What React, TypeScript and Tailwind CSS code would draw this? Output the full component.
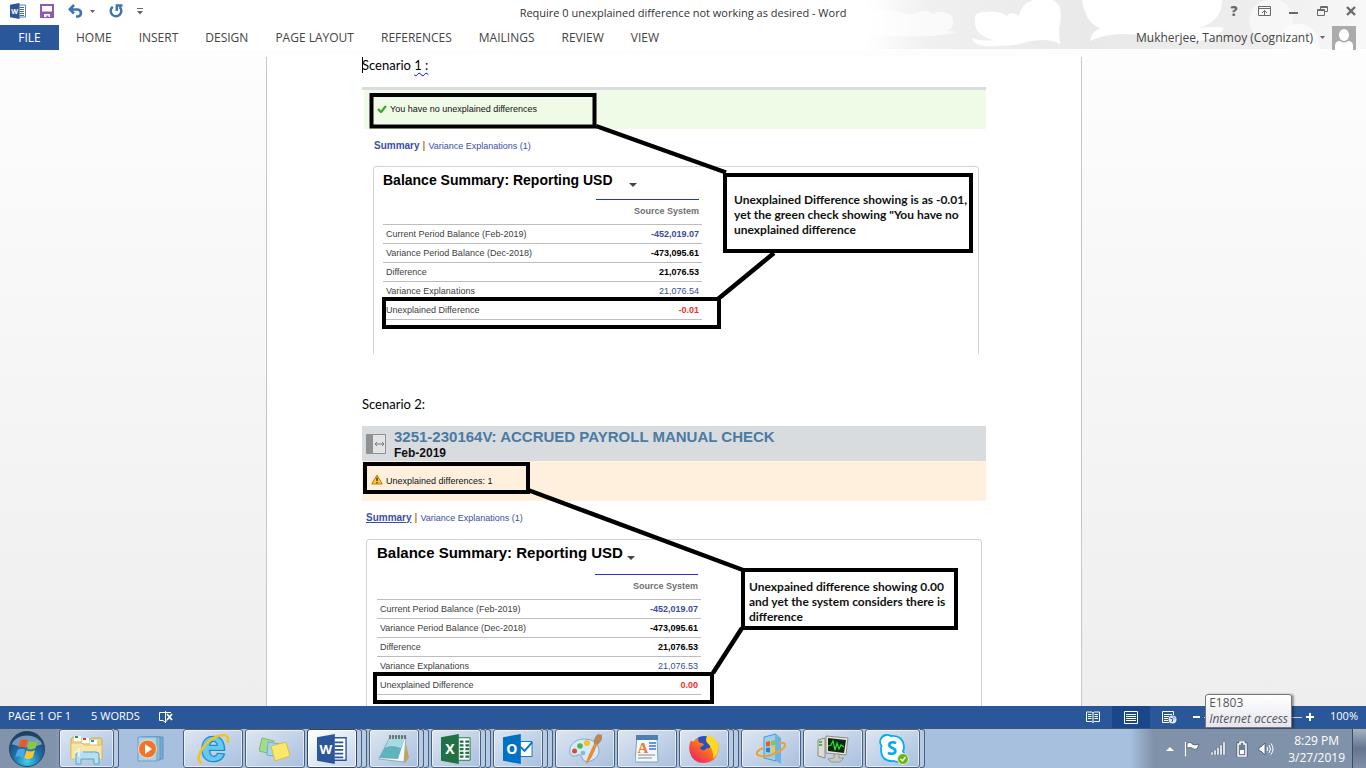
import React from "react";

type Row = { label: string; value: string; tone: string };

const TABS = ["HOME", "INSERT", "DESIGN", "PAGE LAYOUT", "REFERENCES", "MAILINGS", "REVIEW", "VIEW"];

const scenarioOne: Row[] = [
  { label: "Current Period Balance (Feb-2019)", value: "-452,019.07", tone: "font-bold text-[#3c4a9e]" },
  { label: "Variance Period Balance (Dec-2018)", value: "-473,095.61", tone: "font-bold text-black" },
  { label: "Difference", value: "21,076.53", tone: "font-bold text-black" },
  { label: "Variance Explanations", value: "21,076.54", tone: "text-[#3c4a9e]" },
  { label: "Unexplained Difference", value: "-0.01", tone: "font-bold text-[#f03028]" },
];

const scenarioTwo: Row[] = [
  ...scenarioOne.slice(0, 3),
  { label: "Variance Explanations", value: "21,076.53", tone: "text-[#3c4a9e]" },
  { label: "Unexplained Difference", value: "0.00", tone: "font-bold text-[#f03028]" },
];

/* ---------- title bar and ribbon ---------- */

function WordMark({ className }: { className: string }) {
  return (
    <svg viewBox="0 0 32 32" className={className} aria-hidden="true">
      <path d="M17 4h14v24H17z" fill="#fff" stroke="#2b579a" strokeWidth="1.500" />
      <path d="M19 9h9M19 13h9M19 17h9M19 21h9M19 25h9" stroke="#2b579a" strokeWidth="1.800" />
      <path d="M0 3.500 19 0v32L0 28.500z" fill="#2b579a" />
      <text x="9.500" y="21" textAnchor="middle" fontFamily="Open Sans" fontWeight="700" fontSize="14" fill="#fff">W</text>
    </svg>
  );
}

function Clouds() {
  return (
    <svg className="absolute right-0 top-0 h-[49px] w-[500px]" viewBox="0 0 500 49" aria-hidden="true">
      <defs>
        <linearGradient id="sky" x1="0" x2="1">
          <stop offset="0" stopColor="#fff" />
          <stop offset="0.12" stopColor="#f0f0f0" />
          <stop offset="0.45" stopColor="#e9e9e9" />
          <stop offset="0.8" stopColor="#eeeeee" />
          <stop offset="1" stopColor="#f8f8f8" />
        </linearGradient>
      </defs>
      <path d="M0 0h500v49H0z" fill="url(#sky)" />
      <g fill="#fff">
        <path d="M0 12q20-4 34 0 10 4 20 0 6-4 13 2 12-6 20 4 2 10-6 13l10 1q-30 8-91 2z" fillOpacity="0.65" />
        <path d="M109 20q-2-8 10-8 14-2 22 4 4-6 12 0 2-12 14-16h20q12 6 6 28l1 16q-12-7-34-2-10 4-28 4-24 2-26-8 10 4 22 2-20-4-19-20z" />
        <path d="M216 0h140q0 22-24 28 20-2 26 0-6 14-44 14-18 1-34-6-34-6-56 5 0-8 10-13-14-4-18-28z" />
        <path d="M330 3q8-5 16 0-2 24-26 26 12-12 10-26z" fillOpacity="0.6" />
        <path d="M390 4q12-6 24-4 16 8 12 24 20 4 24 25h-44q-2-14-18-14-10-16 2-31z" fillOpacity="0.5" />
        <path d="M418 30q8-8 20-6 14 4 16 25h-34z" fillOpacity="0.6" />
      </g>
    </svg>
  );
}

function Caret({ className = "h-[3px] w-[5px] text-[#666]" }: { className?: string }) {
  return (
    <svg viewBox="0 0 8 4" preserveAspectRatio="none" className={className} aria-hidden="true">
      <path d="M0 0h8L4 4z" fill="currentColor" />
    </svg>
  );
}

function TitleBar() {
  return (
    <div className="relative flex h-[25px] items-center justify-between pb-[3px]">
      <div className="flex items-center pl-[10px]">
        <WordMark className="h-4 w-4" />
        <button aria-label="Save" className="ml-[14px]">
          <svg viewBox="0 0 14 14" className="h-[14px] w-[14px]">
            <path d="M1 1h12v12H1z" fill="#fff" stroke="#8e5bb0" strokeWidth="2" />
            <path d="M1 7.500h12V13H1z" fill="#8e5bb0" />
            <path d="M4 10h6v3H8.500v-1.500H6.500V13H4z" fill="#fff" />
          </svg>
        </button>
        <button aria-label="Undo" className="ml-[14px] flex items-center gap-[6px]">
          <svg viewBox="0 0 16 14" className="h-[14px] w-4" fill="none" stroke="#3f74b0" strokeWidth="2.600">
            <path d="M2 5.500h8a3.800 3.600 0 0 1 0 7H8M6 1 1.800 5.300 6 9.500" />
          </svg>
          <Caret />
        </button>
        <button aria-label="Repeat" className="ml-[14px]">
          <svg viewBox="0 0 14 14" className="h-[14px] w-[14px]" fill="none" stroke="#3f74b0" strokeWidth="2.500">
            <path d="M3.800 2.800A5.300 5.300 0 1 0 10.500 3M7.800 7V1.500H13.500" />
          </svg>
        </button>
        <button aria-label="Customize Quick Access Toolbar" className="ml-[14px]">
          <svg viewBox="0 0 6 7" className="h-[7px] w-[6px]">
            <path d="M0 0h6v1H0zM0 3h6L3 6.500z" fill="#666" />
          </svg>
        </button>
      </div>
      <h1 className="absolute left-1/2 top-[5px] -translate-x-1/2 whitespace-nowrap text-[11px] leading-4 text-[#333]">
        Require 0 unexplained difference not working as desired - Word
      </h1>
      <div className="flex items-center gap-[18px] pr-[10px] text-[#6a6a6a]">
        <button aria-label="Help" className="w-3 text-[14px] font-extrabold leading-4">?</button>
        <button aria-label="Ribbon Display Options">
          <svg viewBox="0 0 13 10" className="h-[10px] w-[13px]" fill="none" stroke="currentColor">
            <path d="M.5.5h12v9H.5zM.5 2.500h12M6.500 9V4.500M4 7l2.500-2.500L9 7" />
          </svg>
        </button>
        <button aria-label="Minimize">
          <svg viewBox="0 0 10 10" className="h-[10px] w-[10px]"><path d="M0 6h9v2H0z" fill="currentColor" /></svg>
        </button>
        <button aria-label="Restore Down">
          <svg viewBox="0 0 11 10" className="h-[10px] w-[11px]" fill="none" stroke="currentColor">
            <path d="M3.500 3V.5h7v5H8M3 1.500h8M.5 3.500h7v6h-7zM0 4.500h8" />
          </svg>
        </button>
        <button aria-label="Close">
          <svg viewBox="0 0 10 10" className="h-[10px] w-[10px]" stroke="currentColor" strokeWidth="2.400">
            <path d="m1 1 8 8M9 1 1 9" />
          </svg>
        </button>
      </div>
    </div>
  );
}

function Ribbon() {
  return (
    <nav className="relative flex h-[25px] items-center text-[12px] leading-4 text-[#444]">
      <button className="h-full w-[59px] bg-[#2a579a] text-white">FILE</button>
      <div className="flex gap-[27px] pl-[17px]">
        {TABS.map((tab) => (
          <button key={tab} className="whitespace-nowrap">{tab}</button>
        ))}
      </div>
      <button className="ml-auto flex h-full items-center gap-[7px] pr-[10px]">
        <span>Mukherjee, Tanmoy (Cognizant)</span>
        <Caret />
        <svg viewBox="0 0 24 24" className="h-6 w-6" aria-hidden="true">
          <path d="M0 0h24v24H0z" fill="#ababab" />
          <ellipse cx="12" cy="9" rx="5" ry="6" fill="#fff" />
          <path d="M3 24v-4q0-5 5-5 4 3 8 0 5 0 5 5v4z" fill="#fff" />
        </svg>
      </button>
    </nav>
  );
}

/* ---------- document ---------- */

function SectionLinks({ underlined }: { underlined?: boolean }) {
  return (
    <div className="flex h-[34px] items-center gap-[3px] text-[10px] leading-3 text-[#3c4fa0]">
      <a href="#summary" className={underlined ? "font-bold underline" : "font-bold"}>Summary</a>
      <span className="font-bold text-[#c87a2c]">|</span>
      <a href="#variance" className="text-[9px]">Variance Explanations (1)</a>
    </div>
  );
}

interface PanelProps {
  rows: Row[];
  className: string;
  titleClass: string;
  tableClass: string;
}

function BalancePanel({ rows, className, titleClass, tableClass }: PanelProps) {
  return (
    <section className={`rounded-t border border-b-0 border-[#d3d3d3] ${className}`}>
      <h2 className={`flex h-[26px] items-center font-bold leading-5 text-black ${titleClass}`}>
        Balance Summary: Reporting USD
        <Caret className="mt-[9px] h-1 w-2 text-[#444]" />
      </h2>
      <table className={`border-separate border-spacing-0 text-[9px] leading-3 ${tableClass}`}>
        <thead>
          <tr>
            <td className="h-[26px] border-b border-[#bdbdbd] p-0" />
            <th scope="col" className="h-[26px] w-[106px] border-b border-[#bdbdbd] p-0 pr-[3px] align-top text-right font-bold text-[#707070]">
              <div className="border-t border-[#2c2cd8] pt-[5px]">Source System</div>
            </th>
          </tr>
        </thead>
        <tbody>
          {rows.map((row) => (
            <tr key={row.label}>
              <th scope="row" className="h-[19px] border-b border-[#bdbdbd] p-0 pl-[3px] text-left font-normal text-[#404040]">{row.label}</th>
              <td className={`h-[19px] border-b border-[#bdbdbd] p-0 pr-[3px] text-right ${row.tone}`}>{row.value}</td>
            </tr>
          ))}
        </tbody>
      </table>
    </section>
  );
}

function ScenarioOne() {
  return (
    <figure className="relative mt-[14px] font-['Liberation_Sans',sans-serif]">
      <div className="h-[3px] bg-[#d8dbe0]" />
      <div className="ml-[2px] flex h-[39px] items-center gap-[3px] bg-[#effbe7] pb-[2px] pl-[13px] text-[9px] leading-3 text-[#111]">
        <svg viewBox="0 0 10 8" className="h-2 w-[10px]" aria-hidden="true">
          <path d="m1 4 3 3 5-6" fill="none" stroke="#3bab35" strokeWidth="2.400" />
        </svg>
        You have no unexplained differences
      </div>
      <div className="pl-3"><SectionLinks /></div>
      <BalancePanel rows={scenarioOne} className="ml-[11px] mr-[7px] mt-[3px] h-[188px] pl-[9px]" titleClass="gap-4 text-[14px]" tableClass="mt-[6px] w-[319px]" />
      <svg className="absolute left-0 top-0 h-[267px] w-[624px]" viewBox="0 0 624 267" fill="none" stroke="#000" strokeWidth="4" aria-hidden="true">
        <path d="M9.500 8h223v31.500h-223zM22 212h335v28H22zM363 88h246v76H363z" />
        <path d="M234 39l130 46.500M412 166l-56 46" strokeWidth="4.500" />
      </svg>
      <figcaption className="absolute left-[372px] top-[105px] whitespace-nowrap font-['Lato',sans-serif] text-[12px] font-bold leading-[15px] text-[#111]">
        Unexplained Difference showing is as -0.01,<br />yet the green check showing "You have no<br />unexplained difference
      </figcaption>
    </figure>
  );
}

function ScenarioTwo() {
  return (
    <figure className="relative mt-[14px] font-['Liberation_Sans',sans-serif]">
      <div className="flex h-[35px] items-center gap-2 bg-[#d9dcdf] pl-1">
        <svg viewBox="0 0 20 20" className="h-5 w-5" aria-hidden="true">
          <path d="M.5.5h19v19H.5z" fill="#e3e4e5" stroke="#8f9193" />
          <path d="M1 1h6v18H1z" fill="#8f9193" />
          <path d="M9 10h9M11 8l-2 2 2 2M16 8l2 2-2 2" fill="none" stroke="#777" />
        </svg>
        <div className="pt-px">
          <h2 className="text-[15px] font-bold leading-[18px] text-[#4b7aa3]">3251-230164V: ACCRUED PAYROLL MANUAL CHECK</h2>
          <p className="text-[12px] font-bold leading-[14px] text-[#111]">Feb-2019</p>
        </div>
      </div>
      <div className="flex h-10 items-center gap-[3px] bg-[#fef0dd] pl-[9px] text-[9px] leading-3 text-[#111]">
        <svg viewBox="0 0 12 11" className="mb-1 h-[11px] w-3" aria-hidden="true">
          <path d="M6 1 11.300 10H.7z" fill="#fcc62c" stroke="#b9781a" strokeLinejoin="round" />
          <path d="M6 3.500v3.500M6 8v1.200" stroke="#4a3300" strokeWidth="1.400" />
        </svg>
        Unexplained differences: 1
      </div>
      <div className="pl-1"><SectionLinks underlined /></div>
      <BalancePanel rows={scenarioTwo} className="mx-1 mt-1 h-[188px] pl-[10px]" titleClass="gap-1 text-[15px]" tableClass="mt-2 w-[324px]" />
      <svg className="absolute left-0 top-0 h-[280px] w-[624px]" viewBox="0 0 624 280" fill="none" stroke="#000" strokeWidth="4" aria-hidden="true">
        <path d="M3 38h163v28H3zM13 248h337v28H13zM381 144h213v58H381z" />
        <path d="M166 64l215 80M380 202l-29 45" strokeWidth="4.500" />
      </svg>
      <figcaption className="absolute left-[387px] top-[153px] whitespace-nowrap font-['Lato',sans-serif] text-[12px] font-bold leading-[15px] text-[#111]">
        Unexpained difference showing 0.00<br />and yet the system considers there is<br />difference
      </figcaption>
    </figure>
  );
}

function Document() {
  return (
    <main className="min-h-0 flex-1 overflow-hidden bg-linear-to-b from-[#fdfdfd] to-[#eeeeee] pr-[18px]">
      <article className="mx-auto h-full w-full max-w-[816px] overflow-hidden border-x border-[#c6c6c6] bg-white px-[95px] font-['Lato',sans-serif] text-black">
        <p className="flex h-4 items-center text-[13px] leading-4">
          <span className="-mr-px h-4 w-px bg-black" />
          Scenario&nbsp;<span className="underline decoration-[#0000ff] decoration-wavy decoration-1 underline-offset-2">1 :</span>
        </p>
        <ScenarioOne />
        <p className="mt-[42px] flex h-4 items-center text-[13px] leading-4">Scenario 2:</p>
        <ScenarioTwo />
      </article>
    </main>
  );
}

/* ---------- status bar ---------- */

function StatusBar() {
  return (
    <footer className="relative flex h-[22px] shrink-0 items-center bg-[#2a579a] text-[11px] leading-4 text-white">
      <span className="pb-[2px] pl-2">PAGE 1 OF 1</span>
      <span className="pb-[2px] pl-5">5 WORDS</span>
      <button aria-label="Proofing errors" className="ml-[18px]">
        <svg viewBox="0 0 15 12" className="h-3 w-[15px]" fill="none" stroke="#fff">
          <path d="M7 1.500H1.500v8H5l2 1.500 2-1.500M7.500 0v12M7.500 1.500H13" />
          <path d="m9 3 5 6M14 3 9 9" strokeWidth="1.800" />
        </svg>
      </button>
      <div className="ml-auto flex h-full items-center">
        <button aria-label="Read Mode" className="mr-3">
          <svg viewBox="0 0 14 12" className="h-3 w-[14px]" fill="none" stroke="#fff">
            <path d="M.5 1h5L7 2l1.500-1h5v9.500h-5L7 11.500l-1.500-1h-5zM7 2v9M2 3.500h3.500M2 5.500h3.500M2 7.500h3.500M8.500 3.500H12M8.500 5.500H12M8.500 7.500H12" />
          </svg>
        </button>
        <button aria-label="Print Layout" className="flex h-full w-[38px] items-center justify-center bg-[#19478a]">
          <svg viewBox="0 0 14 13" className="h-[13px] w-[14px]" fill="none" stroke="#fff">
            <path d="M.5.5h13v12H.5zM2 3.500h10M2 5.500h10M2 7.500h10M2 9.500h10" />
          </svg>
        </button>
        <button aria-label="Web Layout" className="ml-3">
          <svg viewBox="0 0 15 13" className="h-[13px] w-[15px]" fill="none" stroke="#fff">
            <path d="M7 11.500H.5V.5h11V4M2 3.500h8M2 5.500h5M2 7.500h4M2 9.500h4" />
            <circle cx="10.500" cy="8.500" r="4" fill="#dfe8f4" stroke="none" />
            <path d="m8 7 3 1-1 3M11 5.500l2 2" stroke="#2a579a" />
          </svg>
        </button>
        <button aria-label="Zoom Out" className="ml-4 h-[2px] w-[7px] bg-white" />
        <input
          type="range" aria-label="Zoom" min={10} max={500} defaultValue={100}
          className="ml-1 h-px w-[98px] appearance-none bg-[#c3d0e4] [&::-webkit-slider-thumb]:h-[11px] [&::-webkit-slider-thumb]:w-1 [&::-webkit-slider-thumb]:appearance-none [&::-webkit-slider-thumb]:bg-white"
        />
        <button aria-label="Zoom In" className="ml-1">
          <svg viewBox="0 0 8 8" className="h-2 w-2"><path d="M0 3h8v2H0zM3 0h2v8H3z" fill="#fff" /></svg>
        </button>
        <span className="w-[52px] pb-[2px] pr-2 text-right">100%</span>
      </div>
      <div role="tooltip" className="absolute bottom-0 right-[74px] rounded-t-[3px] border border-[#767676] bg-linear-to-b from-white to-[#e4e5f0] px-[3px] text-[12px] leading-4 text-[#575757] shadow-[2px_0_2px_rgba(0,0,0,0.35)]">
        E1803<br /><em>Internet access</em>
      </div>
    </footer>
  );
}

/* ---------- taskbar icons ---------- */

function StartOrb() {
  return (
    <svg viewBox="0 0 40 40" className="h-[38px] w-[38px]" aria-hidden="true">
      <defs>
        <radialGradient id="orb" cx="0.5" cy="0.85" r="0.8">
          <stop offset="0" stopColor="#3fd0f5" />
          <stop offset="0.5" stopColor="#1c6da8" />
          <stop offset="1" stopColor="#1b3f66" />
        </radialGradient>
      </defs>
      <circle cx="20" cy="20" r="18.500" fill="url(#orb)" stroke="#27445f" />
      <path d="M4 15a17 14 0 0 1 32 0q-14 6-32 0z" fill="#c3d7e8" fillOpacity="0.55" />
      <path d="M13 11q4-2.500 8 0l-2.500 8q-4-2.500-8 0z" fill="#ee5a24" />
      <path d="M22.500 11.500q4 2.500 9-.5l-2.500 8q-5 3-9 .5z" fill="#8cc63f" />
      <path d="M10 21q4-2.500 8 0l-2.500 8q-4-2.500-8 0z" fill="#4aa8e8" />
      <path d="M19.500 21.500q4 2.500 9-.5L26 29q-5 3-9 .5z" fill="#fdc52d" />
    </svg>
  );
}

function Explorer() {
  return (
    <svg viewBox="0 0 34 32" className="h-8 w-[34px]" aria-hidden="true">
      <path d="M1 6 3 4h7l2 2h8l2-1h9l1 2v18H1z" fill="#ead58a" stroke="#c9ad5c" />
      <path d="M4 3h7v5H4zM12 5h7v5h-7zM20 7h7v5h-7z" fill="#fff" />
      <path d="M5 3h3v2H5z" fill="#1da03a" />
      <path d="M13 5h3v2h-3z" fill="#d83a22" />
      <path d="M21 7h3v2h-3z" fill="#2d8ad8" />
      <path d="M1 10h11l2 2h18v14H1z" fill="#f6e7a6" stroke="#d9c277" />
      <path d="M6 31V22q0-3 3-3h17q3 0 3 3v9h-5v-5H11v5z" fill="#b6dff2" stroke="#5aa5cb" />
      <path d="M9 15v9M5 19h8" stroke="#fff" />
    </svg>
  );
}

function MediaPlayer() {
  return (
    <svg viewBox="0 0 28 26" className="h-[26px] w-7" aria-hidden="true">
      <path d="M8 1h18v22H8z" fill="#79acd0" stroke="#5e93b9" />
      <path d="M4 1h19v23H4z" fill="#8fc0de" stroke="#5e93b9" />
      <path d="M1 1h19v24H1z" fill="#a7d2e8" stroke="#6c9fc3" />
      <circle cx="10.500" cy="13" r="9" fill="#f0742a" stroke="#fbd9bf" />
      <path d="M8 8v10l7-5z" fill="#fff" />
    </svg>
  );
}

function InternetExplorer() {
  return (
    <svg viewBox="0 0 40 38" className="h-[38px] w-10 overflow-visible" aria-hidden="true">
      <text x="20" y="31" textAnchor="middle" fontFamily="Liberation Sans" fontWeight="700" fontSize="44" fill="#62caf3" stroke="#2188c4" strokeWidth="2.500" paintOrder="stroke">e</text>
      <path d="M9 33Q2 31 9 19 18 6 30 5q7 0 4 8" fill="none" stroke="#f4c320" strokeWidth="2.600" />
    </svg>
  );
}

function StickyNotes() {
  return (
    <svg viewBox="0 0 32 26" className="h-[26px] w-8" aria-hidden="true">
      <path d="m3 2 12 3-3 13L0 15z" fill="#9fdd8c" stroke="#79bd68" />
      <path d="m9 6 12 2-1 13-12-2z" fill="#a6d3f3" stroke="#73abd4" />
      <path d="m12 10 15-4 4 14-15 5z" fill="#fae76e" stroke="#d9bf3c" />
    </svg>
  );
}

function Notepad() {
  return (
    <svg viewBox="0 0 32 30" className="h-[30px] w-8" aria-hidden="true">
      <path d="m27 4 4 20-4 5-2-2z" fill="#c5a35a" />
      <path d="M12 3h16l-2 25L1 25z" fill="#f4f7f8" stroke="#9aabb0" />
      <path d="M12 3h15l-7 22L1 24z" fill="#5fb3bd" />
      <path d="M12 3h15l-4 11Q12 10 7 14z" fill="#a6dbe0" />
      <path d="M12 1v4M15 1v4M18 1v4M21 1v4M24 1v4M27 1v4" stroke="#555" strokeWidth="1.400" />
    </svg>
  );
}

function OfficeTile({ letter, color, children }: { letter: string; color: string; children: React.ReactNode }) {
  return (
    <svg viewBox="0 0 32 32" className="h-[30px] w-[30px]" aria-hidden="true">
      {children}
      <path d="M0 3.500 19 0v32L0 28.500z" fill={color} />
      <text x="9.500" y="21" textAnchor="middle" fontFamily="Open Sans" fontWeight="700" fontSize="15" fill="#fff">{letter}</text>
    </svg>
  );
}

function Excel() {
  return (
    <OfficeTile letter="X" color="#207245">
      <path d="M17 4h14v24H17z" fill="#fff" stroke="#207245" />
      <path d="M20 8h4M26 8h4M20 12h4M26 12h4M20 16h4M26 16h4M20 20h4M26 20h4M20 24h4M26 24h4" stroke="#207245" strokeWidth="2.400" />
    </OfficeTile>
  );
}

function Outlook() {
  return (
    <OfficeTile letter="O" color="#0072c6">
      <path d="M18 8h13v16H18z" fill="#fff" stroke="#0072c6" />
      <path d="m19 14 4 4 8-9" fill="none" stroke="#0072c6" strokeWidth="2" />
    </OfficeTile>
  );
}

function Paint() {
  return (
    <svg viewBox="0 0 34 32" className="h-8 w-[34px]" aria-hidden="true">
      <path d="M16 6C6 6 0 14 2 20q2 5 8 2 4-1 4 3 2 5 9 3 9-4 8-12-2-10-15-10z" fill="#d5e9f7" stroke="#7fabcc" />
      <circle cx="6.500" cy="18" r="2.500" fill="#e04a2f" />
      <circle cx="12" cy="13" r="2.800" fill="#49b848" />
      <circle cx="19" cy="10" r="3" fill="#f5c02c" />
      <circle cx="15" cy="20" r="2.300" fill="#88b7dc" />
      <path d="M18 31q0-4 8-20l3 1q-6 16-11 19z" fill="#ee8b2e" />
      <path d="M26 11q-1-6 4-10l4 1q1 6-5 10z" fill="#b98756" />
    </svg>
  );
}

function WordPad() {
  return (
    <svg viewBox="0 0 24 30" className="h-[30px] w-6" aria-hidden="true">
      <path d="M2 2h20l1 26H0z" fill="#f3f8fc" stroke="#7ea3c2" />
      <path d="M1 1h22v5H1z" fill="#4f7fae" />
      <text x="8" y="19" textAnchor="middle" fontFamily="Liberation Serif" fontWeight="700" fontSize="15" fill="#f07a22">A</text>
      <path d="M14 9h7M14 12h7M14 15h7" stroke="#3f74c9" strokeWidth="1.500" />
      <path d="M3 21h17M3 24h14" stroke="#7f8b96" />
    </svg>
  );
}

function Firefox() {
  return (
    <svg viewBox="0 0 32 32" className="h-[30px] w-[30px]" aria-hidden="true">
      <defs>
        <linearGradient id="fox" x1="0.9" y1="0.1" x2="0.2" y2="0.9">
          <stop offset="0" stopColor="#ffe226" />
          <stop offset="0.45" stopColor="#ff7a16" />
          <stop offset="1" stopColor="#ee2a5c" />
        </linearGradient>
      </defs>
      <circle cx="16" cy="14" r="12" fill="#2a4fc0" />
      <path d="M2 7q1 1 3 1 2-3 5-4-1 3 1 5 3 0 5 2-1 2-4 3-1 2 2 3 4 1 5-2 5 2 3-6-4-4-2-8 8 3 10 8V6q3 6 1 13-3 12-15 12T1 20Q-1 13 2 7z" fill="url(#fox)" />
      <path d="M20 1q9 3 11 13 0 8-5 12 0-12-7-17-2-4 1-8z" fill="#ffd928" />
    </svg>
  );
}

function WindowsUpdate() {
  return (
    <svg viewBox="0 0 32 32" className="h-8 w-8" aria-hidden="true">
      <path d="m9 4 12-3v27L9 25z" fill="#9bcfee" stroke="#4f98cc" />
      <path d="m21 1 5 4v26l-5-3z" fill="#6db3e2" />
      <path d="m11 9 4-1v5l-4 .5z" fill="#ee5a24" />
      <path d="m16 8 4-1v5l-4 .5z" fill="#8cc63f" />
      <path d="m11 15 4-.5v5l-4-.5z" fill="#2f7fd0" />
      <path d="m16 14 4-.5v5l-4 .5z" fill="#fdc52d" />
      <path d="M8 15Q1 18 2 21q3 4 14 1 14-5 14-10 0-3-6-2" fill="none" stroke="#f0a02c" strokeWidth="2" />
    </svg>
  );
}

function TaskManager() {
  return (
    <svg viewBox="0 0 32 28" className="h-7 w-8" aria-hidden="true">
      <path d="M1 5 8 3v20l-7-2z" fill="#dcdcd4" stroke="#8c8c84" />
      <path d="M2 7h3M2 10h3" stroke="#2ca02c" strokeWidth="1.500" />
      <path d="m9 1 22 2-2 17-20-2z" fill="#e8e8e2" stroke="#8c8c84" />
      <path d="m11 3 18 2-2 13-16-2z" fill="#0c2a12" />
      <path d="m11 11 3-1 2-4 2 9 2-7 2 6 2-4 3 2" fill="none" stroke="#2fe03a" strokeWidth="1.200" />
      <path d="M17 19h5v4h5l-4 4h-9l-3-3 6-1z" fill="#c9c9c2" stroke="#9a9a92" />
    </svg>
  );
}

function Skype() {
  return (
    <svg viewBox="0 0 32 32" className="h-8 w-8" aria-hidden="true">
      <path d="M9 2a7 7 0 0 1 5 1q12-1 13 11 0 3-1 4a7 7 0 0 1-9 10q-13 1-13-12 0-2 .500-3A7 7 0 0 1 9 2z" fill="#fff" stroke="#00aff0" strokeWidth="1.800" />
      <text x="15" y="22" textAnchor="middle" fontFamily="Open Sans" fontWeight="700" fontSize="19" fill="#00aff0">S</text>
      <circle cx="26" cy="26" r="5.500" fill="#6bb516" stroke="#e8f2dc" />
      <path d="m23.500 26 2 2 3-4" fill="none" stroke="#fff" strokeWidth="1.300" />
    </svg>
  );
}

const APPS: { name: string; icon: React.ReactNode; stack: number; idle?: boolean; active?: boolean }[] = [
  { name: "Windows Explorer", icon: <Explorer />, stack: 1 },
  { name: "Windows Media Player", icon: <MediaPlayer />, stack: 0, idle: true },
  { name: "Internet Explorer", icon: <InternetExplorer />, stack: 0 },
  { name: "Sticky Notes", icon: <StickyNotes />, stack: 0 },
  { name: "Word", icon: <WordMark className="h-[30px] w-[30px]" />, stack: 2, active: true },
  { name: "Notepad", icon: <Notepad />, stack: 2 },
  { name: "Excel", icon: <Excel />, stack: 2 },
  { name: "Outlook", icon: <Outlook />, stack: 2 },
  { name: "Paint", icon: <Paint />, stack: 0 },
  { name: "WordPad", icon: <WordPad />, stack: 0 },
  { name: "Firefox", icon: <Firefox />, stack: 2 },
  { name: "Windows Update", icon: <WindowsUpdate />, stack: 0 },
  { name: "Task Manager", icon: <TaskManager />, stack: 0 },
  { name: "Skype for Business", icon: <Skype />, stack: 1 },
];

function Taskbar() {
  return (
    <div className="flex h-10 shrink-0 items-center border-t border-[#3f5674] bg-linear-to-r from-[#8294ac] from-4% via-[#a7c0de] via-6% to-[#a7c0de]">
      <button aria-label="Start" className="flex w-[59px] justify-center pr-[6px]"><StartOrb /></button>
      <div className="flex h-full gap-[2px]">
        {APPS.map((app) => (
          <div key={app.name} className="flex h-full w-[60px]">
            <button
              aria-label={app.name}
              className={
                app.idle
                  ? "flex flex-1 items-center justify-center"
                  : app.active
                    ? "flex flex-1 items-center justify-center rounded-[3px] border border-[#2f4560] bg-linear-to-br from-white to-[#c4d4ea] inset-ring inset-ring-white/80"
                    : "flex flex-1 items-center justify-center rounded-[3px] border border-[#4a607e] bg-linear-to-br from-[#dde6f2] to-[#a9c0de] inset-ring inset-ring-white/60"
              }
            >
              {app.icon}
            </button>
            {Array.from({ length: app.stack }, (_, i) => (
              <span key={i} className="w-[5px] rounded-r-[3px] border-y border-r border-[#4a607e] bg-[#b7cae3]" />
            ))}
          </div>
        ))}
      </div>
      <div className="ml-auto flex h-full items-center bg-linear-to-r from-[#a7c0de] to-[#8092aa] to-10% pl-9">
        <div className="flex items-center gap-[10px]">
          <button aria-label="Show hidden icons">
            <svg viewBox="0 0 8 4" className="h-1 w-2"><path d="m0 4 4-4 4 4z" fill="#fff" /></svg>
          </button>
          <svg viewBox="0 0 16 16" className="h-4 w-4" aria-label="Action Center">
            <path d="M1.500 1v14.500" stroke="#46566b" strokeWidth="3" />
            <path d="M1.500 1v14.500" stroke="#fff" strokeWidth="1.800" />
            <path d="M3 2q3-1 5 0v1q3 2 7 0l-2 5q-3 1-5-1-2-1-5 0z" fill="#fff" stroke="#46566b" strokeWidth="0.800" />
          </svg>
          <svg viewBox="0 0 16 13" className="h-[13px] w-4" aria-label="Network">
            <path d="M1 13v-3h2v3zM4 13V8h2v5zM7 13V5.500h2V13zM10 13V3h2v10zM13 13V0h2v13z" fill="#fff" stroke="#46566b" strokeWidth="0.400" />
          </svg>
          <svg viewBox="0 0 12 16" className="h-4 w-3" aria-label="Battery">
            <path d="M4 1h4v2h2v12H2V3h2z" fill="none" stroke="#46566b" strokeWidth="3" />
            <path d="M4 1h4v2h2v12H2V3h2z" fill="#6c7d94" stroke="#fff" strokeWidth="1.500" />
            <path d="M4 9h4v4H4z" fill="#fff" />
          </svg>
          <svg viewBox="0 0 16 14" className="h-[14px] w-4" fill="none" stroke="#fff" aria-label="Volume">
            <path d="M1 5h2l4-4v12L3 9H1z" fill="#fff" stroke="#46566b" strokeWidth="0.800" />
            <path d="M9 5q1.500 2 0 4M11 3q3 4 0 8M13 1.500q4 5.500 0 11" />
          </svg>
        </div>
        <time className="ml-[14px] text-center text-[12px] leading-[17px] text-white">8:29 PM<br />3/27/2019</time>
        <button aria-label="Show desktop" className="ml-[7px] h-full w-[14px] border-l border-[#3b4a60] bg-linear-to-b from-[#a5b1c1] via-[#64758d] to-[#7f90a7]" />
      </div>
    </div>
  );
}

export default function App() {
  return (
    <div className="flex h-screen flex-col overflow-hidden bg-[#fdfdfd] font-['Open_Sans','Noto_Sans',sans-serif]">
      <header className="relative mb-[7px] shrink-0 bg-white">
        <Clouds />
        <TitleBar />
        <Ribbon />
      </header>
      <Document />
      <StatusBar />
      <Taskbar />
    </div>
  );
}
